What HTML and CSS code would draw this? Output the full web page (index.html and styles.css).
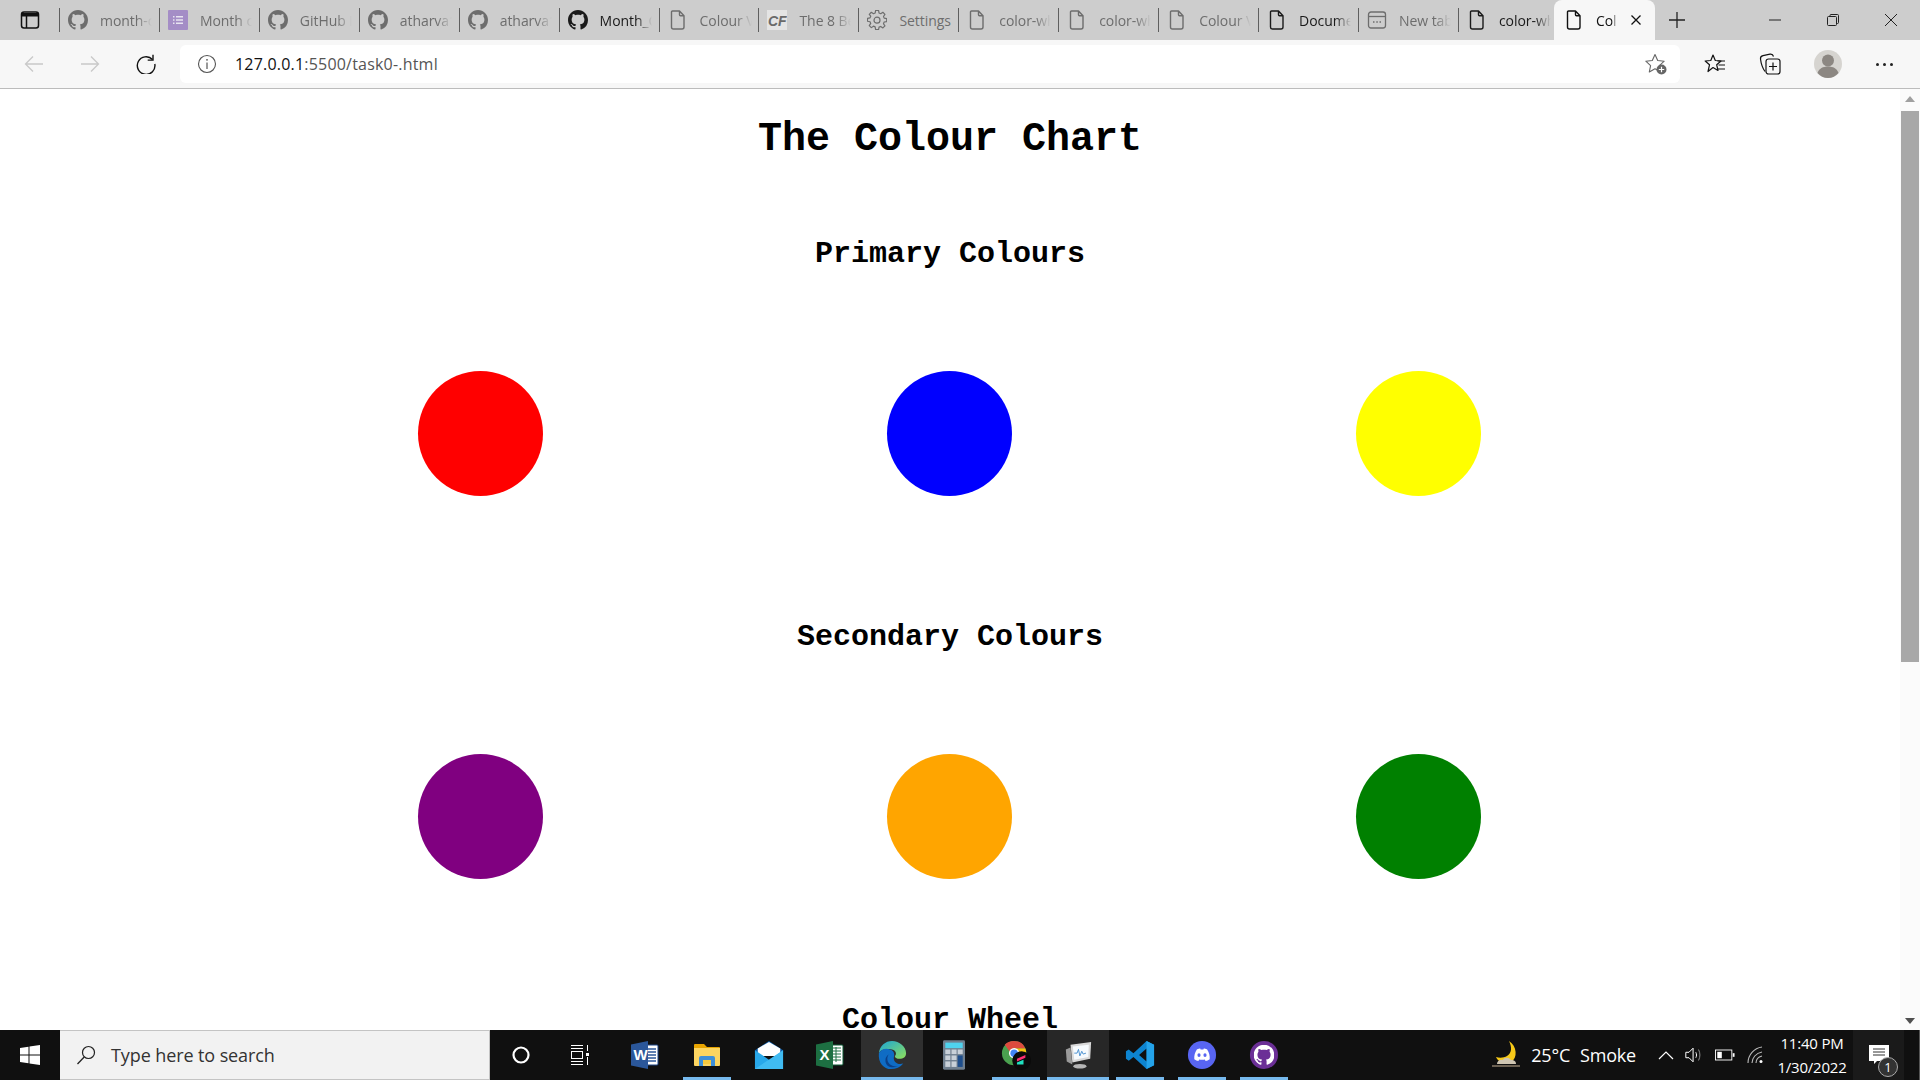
FILE: index.html
```html
<!DOCTYPE html>
<html lang="en">
<head>
<meta charset="utf-8">
<title>The Colour Chart</title>
<link rel="stylesheet" href="styles.css">
</head>
<body>
<svg class="defs" width="0" height="0" aria-hidden="true">
  <symbol id="gh" viewBox="0 0 16 16"><path fill="currentColor" d="M8 0C3.58 0 0 3.58 0 8c0 3.54 2.29 6.53 5.47 7.59.4.07.55-.17.55-.38 0-.19-.01-.82-.01-1.49-2.01.37-2.53-.49-2.69-.94-.09-.23-.48-.94-.82-1.13-.28-.15-.68-.52-.01-.53.63-.01 1.08.58 1.23.82.72 1.21 1.87.87 2.33.66.07-.52.28-.87.51-1.07-1.78-.2-3.64-.89-3.64-3.95 0-.87.31-1.59.82-2.15-.08-.2-.36-1.02.08-2.12 0 0 .67-.21 2.2.82.64-.18 1.32-.27 2-.27.68 0 1.36.09 2 .27 1.53-1.04 2.2-.82 2.2-.82.44 1.1.16 1.92.08 2.12.51.56.82 1.27.82 2.15 0 3.07-1.87 3.75-3.65 3.95.29.25.54.73.54 1.48 0 1.07-.01 1.93-.01 2.2 0 .21.15.46.55.38A8.013 8.013 0 0016 8c0-4.42-3.58-8-8-8z"/></symbol>
  <symbol id="doc" viewBox="0 0 18 20"><path fill="none" stroke="currentColor" stroke-width="1.4" stroke-linejoin="round" d="M3.5 1h7l4.5 4.8V17a2 2 0 0 1-2 2H4.500a2 2 0 0 1-2-2V2a1 1 0 0 1 1-1zM10.500 1v3.800a1 1 0 0 0 1 1H15"/></symbol>
</svg>

<div class="screen">
  <header class="tabstrip">
    <div class="tabside">
      <svg class="ic20" viewBox="0 0 20 20"><rect x="1.500" y="2" width="17" height="16" rx="2.500" fill="none" stroke="#111" stroke-width="1.500"/><path d="M2 3h16v3.500H2z" fill="#111"/><path d="M6.500 6v12" stroke="#111" stroke-width="1.500"/></svg>
    </div>
    <div class="tab dim"><svg class="fav"><use href="#gh"/></svg><span class="tabtext">month-c</span></div>
    <div class="tab dim"><svg class="fav" viewBox="0 0 20 20"><rect width="20" height="20" rx="1" fill="#a48dc6"/><path d="M5 6h1.500v1.500H5zM8 6h7v1.500H8zM5 9.300h1.500v1.500H5zM8 9.300h7v1.500H8zM5 12.600h1.500v1.500H5zM8 12.600h7v1.500H8z" fill="#e8e4f0"/></svg><span class="tabtext">Month c</span></div>
    <div class="tab dim"><svg class="fav"><use href="#gh"/></svg><span class="tabtext">GitHub I</span></div>
    <div class="tab dim"><svg class="fav"><use href="#gh"/></svg><span class="tabtext">atharva1</span></div>
    <div class="tab dim"><svg class="fav"><use href="#gh"/></svg><span class="tabtext">atharva1</span></div>
    <div class="tab"><svg class="fav"><use href="#gh"/></svg><span class="tabtext">Month_C</span></div>
    <div class="tab dim"><svg class="fav"><use href="#doc"/></svg><span class="tabtext">Colour V</span></div>
    <div class="tab dim"><svg class="fav" viewBox="0 0 20 20"><rect width="20" height="20" fill="#e4e4e4"/><text x="1" y="15.500" class="cf">CF</text></svg><span class="tabtext">The 8 Be</span></div>
    <div class="tab dim"><svg class="fav" viewBox="0 0 20 20"><path fill="none" stroke="currentColor" stroke-width="1.200" stroke-linejoin="round" d="M8.500 1h3l.5 2.600 1.700.7 2.200-1.500 2.100 2.100-1.500 2.200.7 1.700 2.600.5v3l-2.600.5-.7 1.700 1.500 2.200-2.100 2.100-2.200-1.500-1.700.7-.5 2.600h-3L8 17.700l-1.700-.7-2.200 1.500L2 16.400l1.500-2.200-.7-1.700L.2 12V9l2.600-.5.7-1.700L2 4.900 4.100 2.800l2.200 1.500L8 3.600z" transform="translate(.3 -.5) scale(.98)"/><circle cx="10" cy="10.200" r="3" fill="none" stroke="currentColor" stroke-width="1.200"/></svg><span class="tabtext tabtext-full">Settings</span></div>
    <div class="tab dim"><svg class="fav"><use href="#doc"/></svg><span class="tabtext">color-wh</span></div>
    <div class="tab dim"><svg class="fav"><use href="#doc"/></svg><span class="tabtext">color-wh</span></div>
    <div class="tab dim"><svg class="fav"><use href="#doc"/></svg><span class="tabtext">Colour V</span></div>
    <div class="tab"><svg class="fav"><use href="#doc"/></svg><span class="tabtext">Docume</span></div>
    <div class="tab dim"><svg class="fav" viewBox="0 0 20 20"><rect x="1.500" y="2" width="17" height="16" rx="2.500" fill="none" stroke="currentColor" stroke-width="1.300"/><path d="M2 6.500h16" stroke="currentColor" stroke-width="1.300"/><path d="M6 12h1.500M9.300 12h1.500M12.500 12H14" stroke="currentColor" stroke-width="1.500"/></svg><span class="tabtext">New tab</span></div>
    <div class="tab last"><svg class="fav"><use href="#doc"/></svg><span class="tabtext">color-wh</span></div>
    <div class="tab active"><svg class="fav"><use href="#doc"/></svg><span class="tabtext tabtext-short">Col</span>
      <svg class="ic12" viewBox="0 0 12 12"><path d="M1.500 1.500l9 9M10.500 1.500l-9 9" stroke="#111" stroke-width="1.300"/></svg></div>
    <svg class="newtab" viewBox="0 0 18 18"><path d="M9 1v16M1 9h16" stroke="#222" stroke-width="1.300"/></svg>
    <div class="winbtns">
      <svg class="ic12" viewBox="0 0 12 12"><path d="M0 6h12" stroke="#222"/></svg>
      <svg class="ic12" viewBox="0 0 12 12"><path d="M3 2.500V1.500a1 1 0 0 1 1-1h6.500a1 1 0 0 1 1 1v7a1 1 0 0 1-1 1h-1" fill="none" stroke="#222"/><rect x=".5" y="2.500" width="9" height="9" rx="1" fill="none" stroke="#222"/></svg>
      <svg class="ic12" viewBox="0 0 12 12"><path d="M0 0l12 12M12 0L0 12" stroke="#222"/></svg>
    </div>
  </header>

  <nav class="toolbar">
    <div class="navbtns">
      <svg class="ic20" viewBox="0 0 20 20"><path d="M19 10H1.500M9 2.500L1.500 10 9 17.500" fill="none" stroke="#c9c9c9" stroke-width="1.300"/></svg>
      <svg class="ic20" viewBox="0 0 20 20"><path d="M1 10h17.500M11 2.500l7.500 7.500-7.500 7.500" fill="none" stroke="#c9c9c9" stroke-width="1.300"/></svg>
      <svg class="ic20" viewBox="0 0 20 20"><path d="M16.500 5.500A8.800 8.800 0 1 0 18.800 10" fill="none" stroke="#111" stroke-width="1.400"/><path d="M17 .8v5.300h-5.300" fill="none" stroke="#111" stroke-width="1.400"/></svg>
    </div>
    <div class="addressbar">
      <svg class="ic20" viewBox="0 0 20 20"><circle cx="10" cy="10" r="8.500" fill="none" stroke="#555" stroke-width="1.100"/><path d="M10 8.500V15" stroke="#555" stroke-width="1.200"/><circle cx="10" cy="5.800" r=".9" fill="#555"/></svg>
      <span class="url"><span class="urlhost">127.0.0.1</span>:5500/task0-.html</span>
      <svg class="ic22 addfav" viewBox="0 0 22 22"><path d="M10 1.500l2.700 6 6.500.7-4.800 4.400 1.300 6.400L10 15.700l-5.700 3.300 1.300-6.400L.8 8.200l6.500-.7z" fill="none" stroke="#666" stroke-width="1.100" stroke-linejoin="round"/><circle cx="16.500" cy="16.500" r="5" fill="#666"/><path d="M16.500 13.800v5.400M13.800 16.500h5.400" stroke="#fff" stroke-width="1.200"/></svg>
    </div>
    <div class="toolicons">
      <svg class="ic22" viewBox="0 0 22 22"><path d="M9 2l2.300 5.500 5.700.5-4.300 3.800 1.300 5.700-5-3-5 4 1.500-6.700L1.200 8l5.600-.5z" fill="none" stroke="#111" stroke-width="1.200" stroke-linejoin="round"/><path d="M13.500 8H21M14.500 12H21M13 16h8" stroke="#111" stroke-width="1.200"/></svg>
      <svg class="ic22" viewBox="0 0 22 22"><path d="M6 18.500C3.500 15 2 10 1.500 6 1.300 4 2.500 3 4 2.700l7-1.500c1.800-.3 3 .5 3.500 2.300" fill="none" stroke="#111" stroke-width="1.200"/><rect x="7" y="6" width="14" height="15" rx="2.500" fill="#f7f7f7" stroke="#111" stroke-width="1.200"/><path d="M14 9.500v8M10 13.500h8" stroke="#111" stroke-width="1.200"/></svg>
      <svg class="avatar" viewBox="0 0 28 28"><circle cx="14" cy="14" r="14" fill="#d6d4d0"/><circle cx="14" cy="10.500" r="6" fill="#8c8782"/><path d="M3.500 23c1.500-4.500 5.500-6.500 10.500-6.500s9 2 10.500 6.500c-2.500 3-6.500 5-10.500 5s-8-2-10.500-5z" fill="#8c8782"/></svg>
      <span class="more"><i></i><i></i><i></i></span>
    </div>
  </nav>

  <div class="viewport">
    <main class="page">
      <h1 class="title">The Colour Chart</h1>
      <section class="group">
        <h2 class="heading">Primary Colours</h2>
        <div class="swatches">
          <div class="dot red"></div><div class="dot blue"></div><div class="dot yellow"></div>
        </div>
      </section>
      <section class="group">
        <h2 class="heading">Secondary Colours</h2>
        <div class="swatches">
          <div class="dot purple"></div><div class="dot orange"></div><div class="dot green"></div>
        </div>
      </section>
      <section class="group">
        <h2 class="heading">Colour Wheel</h2>
      </section>
    </main>
    <div class="scrollbar">
      <span class="arrow up"></span>
      <div class="track"><div class="thumb"></div></div>
      <span class="arrow down"></span>
    </div>
  </div>

  <footer class="taskbar">
    <div class="startbtn"><svg class="ic20" viewBox="0 0 20 20"><path d="M0 3l8.500-1.200v7.700H0zM9.500 1.600L20 0v9.500H9.500zM0 10.500h8.500v7.700L0 17zM9.500 10.500H20V20L9.500 18.400z" fill="#fff"/></svg></div>
    <div class="searchbox">
      <svg class="ic20" viewBox="0 0 20 20"><circle cx="12.500" cy="7.500" r="6" fill="none" stroke="#222" stroke-width="1.200"/><path d="M8.200 12L1.500 19" stroke="#222" stroke-width="1.300"/></svg>
      <span class="searchtext">Type here to search</span>
    </div>
    <div class="apps">
      <div class="app"><svg class="ic20" viewBox="0 0 20 20"><circle cx="10" cy="10" r="7.500" fill="none" stroke="#fff" stroke-width="2.200"/></svg></div>
      <div class="app"><svg class="ic22 taskview" viewBox="0 0 22 22"><path d="M2 1.500h12M2 4.500h12M2 17.500h12M2 20.500h12" stroke="#fff"/><rect x="2.500" y="7.500" width="11" height="7" fill="none" stroke="#fff"/><path d="M18.500 1v6M18.500 13v8" stroke="#fff"/><rect x="17" y="9" width="3" height="3" fill="#fff"/></svg></div>
      <div class="app"><svg class="ic28" viewBox="0 0 28 28"><rect x="11" y="4" width="16" height="20" rx="1" fill="#fff" stroke="#1c4587"/><path d="M15 8h10M15 11h10M15 14h10M15 17h10M15 20h10" stroke="#2b579a" stroke-width="1.300"/><path d="M0 3.500L17 0v28L0 24.500z" fill="#2b579a"/><text x="2.500" y="19" class="appletter">W</text></svg></div>
      <div class="app on"><svg class="ic28" viewBox="0 0 28 28"><path d="M1 4a1 1 0 0 1 1-1h9l3 3h12a1 1 0 0 1 1 1v4H1z" fill="#e8a400"/><path d="M1 7h26v17a1 1 0 0 1-1 1H2a1 1 0 0 1-1-1z" fill="#fcd561"/><path d="M6 25v-8a2 2 0 0 1 2-2h12a2 2 0 0 1 2 2v8h-4v-6h-8v6z" fill="#3e8fd8"/><path d="M10 19h8v4h-8z" fill="#f7c93e"/></svg></div>
      <div class="app"><svg class="ic32" viewBox="0 0 32 32"><path d="M1 11L16 1l15 10v3H1z" fill="#0a5ba8"/><path d="M4 9l12-7 12 7v8H4z" fill="#fff"/><path d="M1 11l15 10 15-10v20H1z" fill="#28a8ea"/><path d="M31 11v20H1z" fill="#50c8f6" opacity=".6"/></svg></div>
      <div class="app"><svg class="ic28" viewBox="0 0 28 28"><rect x="11" y="4" width="16" height="20" rx="1" fill="#fff" stroke="#0e5c36"/><path d="M16 7h9M16 10h9M16 13h9M16 16h9M16 19h9M20 6v15" stroke="#1d6f42"/><path d="M0 3.500L17 0v28L0 24.500z" fill="#1d6f42"/><text x="3.500" y="19" class="appletter">X</text></svg></div>
      <div class="app open"><svg class="ic32" viewBox="0 0 32 32"><defs><linearGradient id="edgeg" x1="0" y1="0" x2="1" y2="1"><stop offset="0" stop-color="#1aa5d8"/><stop offset="1" stop-color="#8fe05a"/></linearGradient></defs><path d="M2 14C3 6 9 1 16 1c8 0 15 6 15 13 0 4-3 6-7 6-3 0-5-1-5-3 2-1 2-6-3-7C9 9 4 10 2 14z" fill="url(#edgeg)"/><path d="M2 14c2-4 7-6 12-4 4 1 5 5 4 8-1 5 4 9 10 7-3 4-8 6-13 6C7 31 1 24 2 14z" fill="#0f6cc4"/><path d="M11 20c0 5 5 9 11 8-6 3-13 0-13-6 0-3 1-5 4-7-1 1-2 3-2 5z" fill="#0b3f87"/></svg></div>
      <div class="app"><svg class="ic32 calc" viewBox="0 0 24 32"><rect width="24" height="32" rx="1.500" fill="#6f7f8f"/><rect x="2.500" y="2.500" width="19" height="6" fill="#4fd2ee"/><g fill="#c8d0d8"><rect x="2.500" y="10" width="5.500" height="5"/><rect x="9.300" y="10" width="5.500" height="5"/><rect x="16" y="10" width="5.500" height="5"/><rect x="2.500" y="16.500" width="5.500" height="5"/><rect x="9.300" y="16.500" width="5.500" height="5"/><rect x="2.500" y="23" width="5.500" height="6"/><rect x="9.300" y="23" width="5.500" height="6"/></g><rect x="16" y="16.500" width="5.500" height="12.500" fill="#1e4e8c"/></svg></div>
      <div class="app on"><svg class="ic32" viewBox="0 0 32 32"><circle cx="14" cy="14" r="13" fill="#4aa14f"/><path d="M14 1a13 13 0 0 1 12 8H14a5 5 0 0 0-5 3L4 5a13 13 0 0 1 10-4z" fill="#dd4b3e"/><path d="M26 9c2 5 0 10-3 13l-6-8a5 5 0 0 0-3-5z" fill="#f4c20d"/><circle cx="14" cy="14" r="5.500" fill="#fff"/><circle cx="14" cy="14" r="4" fill="#4285f4"/><circle cx="22" cy="22" r="10" fill="#0a0a0a"/><path d="M17 20l9-4v3l-9 4z" fill="#ff2e74"/><path d="M17 24l7-3v5h-7z" fill="#1fe0c0"/></svg></div>
      <div class="app open alt"><svg class="ic32" viewBox="0 0 32 32"><path d="M3 10l5-2 2 18-6-3z" fill="#9a9a9a"/><path d="M8 5l22-3-1 18-19 4z" fill="#d8d8d8"/><path d="M10.500 7l17-2-.5 13-15 3z" fill="#f6fafd"/><path d="M12 14l3 0 1.500-4 1.500 7 2-5 1.500 3 3-1" fill="none" stroke="#4a90d0"/><ellipse cx="18" cy="28" rx="7" ry="2.500" fill="#b5b5b5"/></svg></div>
      <div class="app on"><svg class="ic32" viewBox="0 0 32 32"><path d="M23 1l8 4v22l-8 4L9 18l-5 4-3-2v-8l3-2 5 4zM23 9l-8 7 8 7z" fill="#0d84d0"/><path d="M23 1l8 4v22l-8 4z" fill="#24a3ea"/></svg></div>
      <div class="app on"><svg class="ic32" viewBox="0 0 32 32"><circle cx="16" cy="16" r="15" fill="#5865f2"/><path d="M10.500 10c1.500-.7 3-1 3.600-1l.4 1h3l.4-1c.6 0 2.100.3 3.600 1 2 3 3 6.500 2.700 10.500-1.500 1.100-3 1.700-4.300 2l-1-1.600.9-.5c-2.500 1-5.100 1-7.600 0l.9.5-1 1.600c-1.300-.3-2.800-.9-4.300-2C7.500 16.500 8.500 13 10.500 10z" fill="#fff"/><ellipse cx="12.800" cy="16" rx="1.700" ry="2" fill="#5865f2"/><ellipse cx="19.200" cy="16" rx="1.700" ry="2" fill="#5865f2"/></svg></div>
      <div class="app on"><svg class="ic32 ghapp" viewBox="0 0 32 32"><circle cx="16" cy="16" r="15" fill="#6b2f96"/><svg x="5" y="5" width="22" height="22"><use href="#gh"/></svg></svg></div>
    </div>
    <div class="tray">
      <svg class="moon" viewBox="0 0 30 28"><path d="M18 0c3 6 3 12-2 15-3 2-8 2-11 1 2 5 9 8 15 5 7-4 6-16-2-21z" fill="#f7c918"/><path d="M6 23c0-3 3-5 6-4 1-3 6-3 8 0 3 0 5 1 5 4z" fill="#cfc5b2"/><path d="M1 25h28" stroke="#8a7b68" stroke-width="1.500"/></svg>
      <span class="weather">25°C</span>
      <span class="weather smoke">Smoke</span>
      <svg class="trayic chev" viewBox="0 0 16 16"><path d="M1 12l7-7 7 7" fill="none" stroke="#fff" stroke-width="1.200"/></svg>
      <svg class="trayic speaker" viewBox="0 0 22 22"><path d="M2 8h3.500L10 3.500v15L5.500 14H2z" fill="none" stroke="#fff" stroke-width="1.100"/><path d="M13 8c1 2 1 4 0 6" fill="none" stroke="#fff" stroke-width="1.100"/><path d="M16 5c2 4 2 8 0 12" fill="none" stroke="#999"/></svg>
      <svg class="trayic battery" viewBox="0 0 22 16"><rect x=".5" y="2.500" width="18" height="11" fill="none" stroke="#fff"/><rect x="2.500" y="4.500" width="5" height="7" fill="#fff"/><rect x="19.500" y="6" width="2" height="4" fill="#fff"/></svg>
      <svg class="trayic wifi" viewBox="0 0 20 20"><path d="M1 18C1 10 7 3 15 2M5 18c0-5 4-10 10-11M9 18c0-3 2-6 6-7" fill="none" stroke="#bbb" stroke-width="1.100"/><circle cx="14" cy="16.500" r="1.500" fill="#fff"/></svg>
      <div class="clock"><span>11:40 PM</span><span>1/30/2022</span></div>
      <div class="notify">
        <svg class="ic20" viewBox="0 0 20 20"><path d="M0 0h20v16H8l-3 3v-3H0z" fill="#fff"/><path d="M4 4h12M4 7h12M4 10h12" stroke="#333"/></svg>
        <span class="badge">1</span>
      </div>
      <div class="peek"></div>
    </div>
  </footer>
</div>
</body>
</html>
```
FILE: styles.css
```css
* { box-sizing: border-box; }
html, body { margin: 0; height: 100%; overflow: hidden; }
body { font-family: "Open Sans", "Noto Sans", sans-serif; background: #fff; }
.defs { position: absolute; }
svg { display: block; flex: none; }
.ic12 { width: 12px; height: 12px; }
.ic20 { width: 20px; height: 20px; }
.ic22 { width: 22px; height: 22px; }
.ic28 { width: 28px; height: 28px; }
.ic32 { width: 30px; height: 30px; }
.calc { width: 22px; }
.taskview { margin-right: 6px; }

.screen { display: flex; flex-direction: column; height: 1080px; }

/* tab strip */
.tabstrip { display: flex; align-items: stretch; height: 40px; background: #cdcdcd; color: #222; }
.tabside { width: 59px; display: flex; align-items: center; padding-left: 20px; }
.tab { position: relative; width: 99.930px; display: flex; align-items: center; gap: 12px; padding-left: 9px; color: #1a1a1a; }
.tab::before { content: ""; position: absolute; left: 0; top: 8px; height: 24px; width: 1px; background: #5f5f5f; }
.tab.dim { color: #6d6d6d; }
.fav { width: 20px; height: 20px; color: inherit; }
.tabtext { width: 52px; font-size: 14px; letter-spacing: -.05px; white-space: nowrap; overflow: hidden;
  -webkit-mask-image: linear-gradient(to right, #000 70%, transparent 100%); mask-image: linear-gradient(to right, #000 70%, transparent 100%); }
.tabtext-full { -webkit-mask-image: none; mask-image: none; }
.tab.last { width: 96px; }
.tab.active { width: 101px; height: 40px; background: #f7f7f7; border-radius: 8px 8px 0 0; padding-left: 10px; color: #111; gap: 12px; }
.tab.active::before { display: none; }
.tabtext-short { width: 22px; }
.newtab { width: 18px; height: 18px; align-self: center; margin-left: 13px; }
.winbtns { margin-left: auto; display: flex; align-items: center; gap: 46px; padding-right: 23px; }

/* toolbar */
.toolbar { display: flex; align-items: center; height: 49px; background: #f7f7f7; border-bottom: 1px solid #bcbcbc; }
.navbtns { width: 180px; display: flex; align-items: center; gap: 36px; padding-left: 24px; }
.addressbar { width: 1500px; height: 38px; background: #fff; border-radius: 6px; display: flex; align-items: center; gap: 18px; padding: 0 13px 0 17px; }
.url { font-size: 16px; letter-spacing: .2px; color: #555; }
.urlhost { color: #111; }
.addfav { margin-left: auto; }
.toolicons { flex: 1; display: flex; align-items: center; padding-left: 24px; gap: 33px; }
.avatar { width: 28px; height: 28px; }
.more { display: flex; gap: 4px; margin-left: 1px; }
.more i { width: 3px; height: 3px; border-radius: 50%; background: #222; }

/* page */
.viewport { flex: 1; min-height: 0; display: flex; }
.page { flex: 1; overflow: hidden; font-family: "Liberation Mono", monospace; color: #000; text-align: center; }
.title { margin: 28px 0 75px; font-size: 40px; font-weight: 700; }
.group { margin-bottom: 124px; }
.heading { margin: 0 0 100px; font-size: 30px; font-weight: 700; }
.swatches { width: 1409px; margin: 0 auto; display: grid; grid-template-columns: repeat(3, 469px); justify-items: center; }
.dot { width: 125px; height: 125px; border-radius: 50%; }
.red { background: red; }
.blue { background: blue; }
.yellow { background: yellow; }
.purple { background: purple; }
.orange { background: orange; }
.green { background: green; }

.scrollbar { width: 20px; background: #fbfbfb; display: flex; flex-direction: column; align-items: center; padding: 7px 0 6px; }
.track { flex: 1; width: 100%; padding: 9px 1px 0; }
.thumb { height: 551px; background: #a8a8a8; }
.arrow { width: 0; height: 0; border-left: 5px solid transparent; border-right: 5px solid transparent; }
.arrow.up { border-bottom: 6px solid #a0a0a0; }
.arrow.down { border-top: 6px solid #505050; }

/* taskbar */
.taskbar { height: 50px; background: #101010; display: flex; align-items: stretch; color: #fff; }
.startbtn { width: 60px; display: flex; align-items: center; justify-content: center; }
.searchbox { width: 430px; background: #f2f2f2; border: 1px solid #c4c4c4; border-width: 1px 1px 1px 0; display: flex; align-items: center; gap: 15px; padding-left: 16px; color: #222; }
.searchtext { font-size: 18px; letter-spacing: -.1px; color: #333; }
.apps { display: flex; }
.app { position: relative; width: 61.900px; display: flex; align-items: center; justify-content: center; }
.app.on::after, .app.open::after { content: ""; position: absolute; left: 7px; right: 7px; bottom: 0; height: 3px; background: #76b9ed; }
.app.open { background: #2f2f2f; }
.app.alt { background: #272727; }
.app.open::after { left: 0; right: 0; }
.ghapp { color: #fff; }
.cf { font: italic 700 14px "Liberation Sans", sans-serif; fill: #6a6a6a; }
.appletter { font: 700 15px "Liberation Sans", sans-serif; fill: #fff; }

.tray { margin-left: auto; display: flex; align-items: center; }
.moon { width: 30px; height: 28px; margin-right: 10px; }
.weather { font-size: 18px; letter-spacing: -.2px; margin-right: 10px; }
.smoke { margin-right: 22px; }
.trayic { width: 20px; height: 20px; }
.chev { width: 16px; height: 16px; margin-right: 10px; }
.speaker { margin-right: 11px; }
.battery { margin-right: 12px; }
.wifi { margin-right: 4px; }
.clock { width: 82px; display: flex; flex-direction: column; align-items: center; font-size: 15px; line-height: 24px; letter-spacing: -.2px; white-space: nowrap; }
.notify { position: relative; width: 51px; height: 100%; background: #1a1a1a; display: flex; align-items: center; padding-left: 16px; }
.badge { position: absolute; left: 25px; bottom: 3px; width: 20px; height: 20px; border-radius: 50%; border: 1px solid #aaa; background: #333; font-size: 13px; line-height: 18px; text-align: center; }
.peek { width: 16px; height: 100%; border-right: 1px solid #555; }
```
